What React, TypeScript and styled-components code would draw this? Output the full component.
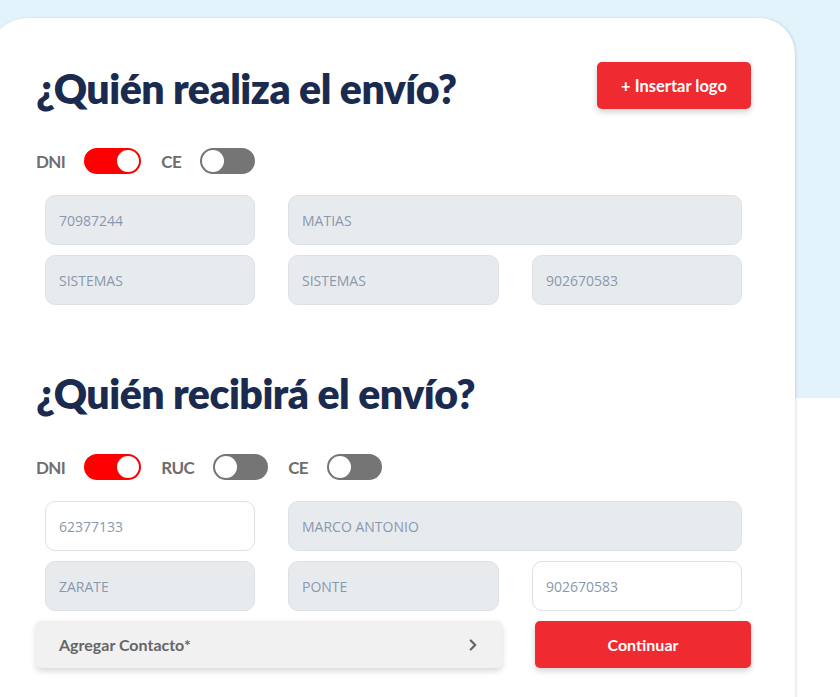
import React from "react";
import styled, { createGlobalStyle } from "styled-components";
import { ChevronRight } from "lucide-react";

const GlobalStyle = createGlobalStyle`
  body {
    margin: 0;
    font-family: "Lato", "Open Sans", sans-serif;
    background: #fff;
  }
`;

const Page = styled.div`
  min-height: 697px;
  overflow: hidden;
  background: linear-gradient(#e3f3fb 0, #e3f3fb 398px, #fff 398px);
  padding-top: 18px;
  box-sizing: border-box;
`;

const Card = styled.div`
  margin-left: -12px;
  width: 807px;
  min-height: 700px;
  background: #fff;
  border-radius: 40px 36px 0 0;
  box-shadow: 1px 0 3px rgba(0, 0, 0, 0.12);
  padding: 45px 44px 0 48px;
  box-sizing: border-box;
`;

const Header = styled.div`
  display: flex;
  justify-content: space-between;
  align-items: flex-start;
`;

const Title = styled.h2<{ $top?: number }>`
  margin: ${(p) => p.$top ?? 0}px 0 0;
  font-size: 41px;
  line-height: 52px;
  font-weight: 800;
  color: #1a2b4f;
  letter-spacing: -0.5px;
`;

const RedButton = styled.button<{ $w: number }>`
  width: ${(p) => p.$w}px;
  height: 47px;
  border: none;
  border-radius: 5px;
  background: #ef2a30;
  color: #fff;
  font-family: inherit;
  font-size: 16px;
  font-weight: 700;
  box-shadow: 0 3px 6px rgba(0, 0, 0, 0.18);
  cursor: pointer;
`;

const LogoButton = styled(RedButton)`
  margin-top: -1px;
  font-size: 16.5px;
`;

const ToggleRow = styled.div<{ $top: number }>`
  display: flex;
  align-items: center;
  margin-top: ${(p) => p.$top}px;
  height: 26px;
`;

const ToggleItem = styled.label`
  display: flex;
  align-items: center;
  gap: 19px;
  margin-right: 20px;
  font-size: 17px;
  letter-spacing: -0.6px;
  font-weight: 700;
  color: #6e6e6e;
`;

const Track = styled.span<{ $on: boolean }>`
  width: ${(p) => (p.$on ? 57 : 55)}px;
  height: 26px;
  border-radius: 13px;
  border: 2px solid ${(p) => (p.$on ? "#ff0000" : "#757575")};
  background: ${(p) => (p.$on ? "#ff0000" : "#757575")};
  box-sizing: border-box;
  display: flex;
  justify-content: ${(p) => (p.$on ? "flex-end" : "flex-start")};
  align-items: center;
`;

const Knob = styled.span`
  width: 22px;
  height: 22px;
  border-radius: 50%;
  background: #fff;
`;

const Fields = styled.div<{ $top: number }>`
  display: grid;
  grid-template-columns: 210px 211px 210px;
  column-gap: 33px;
  row-gap: 10px;
  margin: ${(p) => p.$top}px 0 0 9px;
  width: 697px;
`;

const Field = styled.div<{ $white?: boolean; $span?: boolean }>`
  height: 50px;
  box-sizing: border-box;
  border-radius: 10px;
  border: 1px solid #dde1e6;
  background: ${(p) => (p.$white ? "#fff" : "#e8ebee")};
  grid-column: ${(p) => (p.$span ? "span 2" : "auto")};
  display: flex;
  align-items: center;
  padding-left: 13px;
  font-family: "Open Sans", sans-serif;
  font-size: 14px;
  color: #8898ad;
`;

const Footer = styled.div`
  display: flex;
  gap: 33px;
  margin-top: 10px;
`;

const ContactBar = styled.div`
  width: 466px;
  height: 47px;
  box-sizing: border-box;
  border-radius: 5px;
  background: #f1f1f1;
  box-shadow: 0 3px 6px rgba(0, 0, 0, 0.16);
  display: flex;
  align-items: center;
  justify-content: space-between;
  padding: 0 20px 0 23px;
  font-size: 16px;
  font-weight: 700;
  color: #666;
`;

function Toggle({ label, on }: { label: string; on?: boolean }) {
  return (
    <ToggleItem>
      {label}
      <Track $on={!!on}>
        <Knob />
      </Track>
    </ToggleItem>
  );
}

export default function App() {
  return (
    <>
      <GlobalStyle />
      <Page>
        <Card>
          <Header>
            <Title>¿Quién realiza el envío?</Title>
            <LogoButton $w={154}>+ Insertar logo</LogoButton>
          </Header>
          <ToggleRow $top={33}>
            <Toggle label="DNI" on />
            <Toggle label="CE" />
          </ToggleRow>
          <Fields $top={21}>
            <Field>70987244</Field>
            <Field $span>MATIAS</Field>
            <Field>SISTEMAS</Field>
            <Field>SISTEMAS</Field>
            <Field>902670583</Field>
          </Fields>

          <Title $top={63}>¿Quién recibirá el envío?</Title>
          <ToggleRow $top={34}>
            <Toggle label="DNI" on />
            <Toggle label="RUC" />
            <Toggle label="CE" />
          </ToggleRow>
          <Fields $top={21}>
            <Field $white>62377133</Field>
            <Field $span>MARCO ANTONIO</Field>
            <Field>ZARATE</Field>
            <Field>PONTE</Field>
            <Field $white>902670583</Field>
          </Fields>

          <Footer>
            <ContactBar>
              Agregar Contacto*
              <ChevronRight size={18} strokeWidth={3} color="#666" />
            </ContactBar>
            <RedButton $w={216}>Continuar</RedButton>
          </Footer>
        </Card>
      </Page>
    </>
  );
}
